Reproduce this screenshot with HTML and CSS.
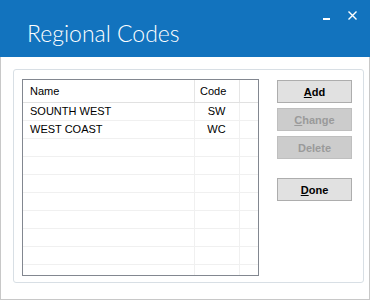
FILE: index.html
```html
<!DOCTYPE html>
<html>
  <head>
    <title>Regional Codes</title>
    <meta charset='utf-8'>
    <link rel="stylesheet" href="styles.css">
  </head>
  <body>
    <div class='window'>
      <div class='titlebar'>
        <span class='title'>Regional Codes</span>
        <div class='controls'>
          <span class='min'></span>
          <svg class='close' width='9' height='9' viewBox='0 0 9 9'>
            <path d='M0.5 0.5 L8.5 8.5 M8.5 0.5 L0.5 8.5' stroke='#fff' stroke-width='1.4'/>
          </svg>
        </div>
      </div>
      <div class='content'>
        <div class='group'>
          <div class='list'>
            <div class='row head'>
              <div class='cell name'>Name</div>
              <div class='cell code'>Code</div>
              <div class='cell fill'></div>
            </div>
            <div class='row'>
              <div class='cell name'>SOUNTH WEST</div>
              <div class='cell code center'>SW</div>
              <div class='cell fill'></div>
            </div>
            <div class='row'>
              <div class='cell name'>WEST COAST</div>
              <div class='cell code center'>WC</div>
              <div class='cell fill'></div>
            </div>
            <div class='row'><div class='cell name'></div><div class='cell code'></div><div class='cell fill'></div></div>
            <div class='row'><div class='cell name'></div><div class='cell code'></div><div class='cell fill'></div></div>
            <div class='row'><div class='cell name'></div><div class='cell code'></div><div class='cell fill'></div></div>
            <div class='row'><div class='cell name'></div><div class='cell code'></div><div class='cell fill'></div></div>
            <div class='row'><div class='cell name'></div><div class='cell code'></div><div class='cell fill'></div></div>
            <div class='row'><div class='cell name'></div><div class='cell code'></div><div class='cell fill'></div></div>
            <div class='row'><div class='cell name'></div><div class='cell code'></div><div class='cell fill'></div></div>
            <div class='row last'><div class='cell name'></div><div class='cell code'></div><div class='cell fill'></div></div>
          </div>
          <div class='buttons'>
            <button class='btn'><u>A</u>dd</button>
            <button class='btn off'><u>C</u>hange</button>
            <button class='btn off'>Delete</button>
            <button class='btn done'><u>D</u>one</button>
          </div>
        </div>
      </div>
    </div>
  </body>
</html>
```

FILE: styles.css
```css
body {
  margin: 0;
  padding: 0;
  background: #fff;
  font-family: "Liberation Sans", Arial, sans-serif;
  color: #000;
}

.window {
  width: 370px;
  height: 300px;
  display: flex;
  flex-direction: column;
}

/* Title bar */
.titlebar {
  height: 57px;
  background: #1273be;
  display: flex;
  align-items: flex-start;
  justify-content: space-between;
  flex-shrink: 0;
}
.title {
  font-family: Lato, "Open Sans", sans-serif;
  font-weight: 300;
  font-size: 23px;
  color: #fff;
  margin: 20px 0 0 27px;
  line-height: 26px;
}
.controls {
  display: flex;
  align-items: flex-start;
  margin: 11px 13px 0 0;
}
.min {
  width: 7px;
  height: 2px;
  background: #fff;
  margin: 7px 18px 0 0;
}

/* Body */
.content {
  flex: 1;
  border: 1px solid #c8c8c8;
  border-top: none;
  padding: 12px 5px 16px 12px;
}
.group {
  height: 214px;
  box-sizing: border-box;
  border: 1px solid #d8dfe5;
  border-radius: 3px;
  padding: 9px 11px 0 8px;
  display: flex;
  align-items: flex-start;
}

/* List view */
.list {
  width: 237px;
  height: 197px;
  box-sizing: border-box;
  border: 1px solid #828790;
  overflow: hidden;
  font-size: 11px;
}
.row {
  display: flex;
  height: 17px;
  border-bottom: 1px solid #f0f0f0;
}
.row.last { border-bottom: none; }
.row.head {
  height: 22px;
  border-bottom: 1px solid #e1e1e1;
}
.cell {
  box-sizing: border-box;
  border-right: 1px solid #f0f0f0;
  padding-left: 7px;
  line-height: 17px;
  white-space: nowrap;
}
.head .cell {
  line-height: 23px;
  border-right-color: #e5e5e5;
}
.name { width: 172px; }
.code { width: 45px; padding-left: 5px; }
.fill { width: 18px; border-right: none; }
.center { text-align: center; padding-left: 0; padding-right: 1px; }

/* Buttons */
.buttons {
  margin-left: 18px;
  display: flex;
  flex-direction: column;
  gap: 5px;
  margin-top: 1px;
}
.btn {
  width: 75px;
  height: 23px;
  box-sizing: border-box;
  border: 1px solid #adadad;
  background: #e1e1e1;
  font-family: "Liberation Sans", Arial, sans-serif;
  font-weight: bold;
  font-size: 11px;
  color: #000;
  padding: 0;
}
.btn.off {
  background: #cccccc;
  border-color: #bfbfbf;
  color: #9a9a9a;
}
.btn.done { margin-top: 14px; }
.btn u { text-underline-offset: 1px; }
```
